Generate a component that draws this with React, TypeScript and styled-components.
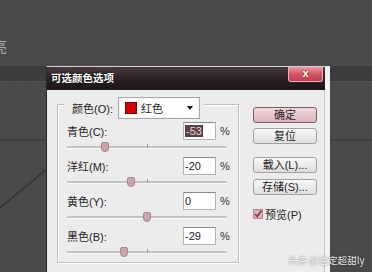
import React from 'react';
import styled, { createGlobalStyle } from 'styled-components';

const GlobalStyle = createGlobalStyle`
  html, body {
    margin: 0;
    padding: 0;
    background: #4a4a4a;
  }
  body {
    font-family: "Liberation Sans", "Noto Sans CJK SC", sans-serif;
  }
`;

const rows = [
  { label: '青色(C):', value: -53, selected: true },
  { label: '洋红(M):', value: -20 },
  { label: '黄色(Y):', value: 0 },
  { label: '黑色(B):', value: -29 },
];

const TRACK = 160;

const App = () => {
  return (
    <Canvas>
      <GlobalStyle />
      <GhostText>亮</GhostText>
      <PanelBand />
      <CurveArt width="372" height="190" viewBox="0 0 372 190">
        <line x1="0" y1="58" x2="372" y2="58" stroke="#3b3b3b" strokeWidth="1.5" />
        <line x1="15" y1="0" x2="15" y2="190" stroke="#464646" strokeWidth="1" />
        <line x1="31" y1="0" x2="31" y2="190" stroke="#464646" strokeWidth="1" />
        <line x1="0" y1="126" x2="48" y2="86" stroke="#333333" strokeWidth="1.5" />
      </CurveArt>

      <Dialog>
        <TitleBar>
          <Title>可选颜色选项</Title>
          <CloseButton>x</CloseButton>
        </TitleBar>
        <Body>
          <GroupBox>
            <Header>
              <HeaderLabel>颜色(O):</HeaderLabel>
              <Dropdown>
                <Swatch />
                <DropText>红色</DropText>
                <Arrow />
              </Dropdown>
            </Header>
            {rows.map((r) => (
              <Row key={r.label}>
                <InputLine>
                  <FieldLabel>{r.label}</FieldLabel>
                  <NumberBox>
                    {r.selected ? <Selected>{r.value}</Selected> : r.value}
                  </NumberBox>
                  <Percent>%</Percent>
                </InputLine>
                <SliderArea>
                  <Track>
                    <Tick />
                    <Thumb $pos={TRACK / 2 + (r.value * TRACK) / 200} />
                  </Track>
                </SliderArea>
              </Row>
            ))}
          </GroupBox>

          <SideColumn>
            <Button $primary>确定</Button>
            <Button $gap={5}>复位</Button>
            <Button $gap={13}>载入(L)...</Button>
            <Button $gap={6}>存储(S)...</Button>
            <CheckRow>
              <CheckBox>
                <svg width="10" height="10" viewBox="0 0 10 10">
                  <path d="M2 5 L4.2 7.5 L8.5 1.5" fill="none" stroke="#8e2f45" strokeWidth="1.6" />
                </svg>
              </CheckBox>
              <span>预览(P)</span>
            </CheckRow>
          </SideColumn>
        </Body>
      </Dialog>

      <Watermark>头条 @注定超甜ly</Watermark>
    </Canvas>
  );
};

export default App;

const Canvas = styled.div`
  position: relative;
  width: 372px;
  height: 272px;
  overflow: hidden;
  background: #4a4a4a;
  padding-top: 38px;
  box-sizing: border-box;
`;

const GhostText = styled.div`
  margin-left: -8px;
  height: 15px;
  font-size: 15px;
  line-height: 15px;
  color: #a9a9a9;
  font-family: "Noto Sans CJK SC", sans-serif;
`;

const PanelBand = styled.div`
  margin-top: 13px;
  height: 15px;
  background: #3c3c3c;
  border-bottom: 1px solid #525252;
`;

const CurveArt = styled.svg`
  display: block;
`;

const Dialog = styled.div`
  position: absolute;
  left: 46px;
  top: 66px;
  width: 284px;
  height: 210px;
  box-sizing: border-box;
  border-left: 1px solid #262626;
  border-top: 1px solid #d6d6d6;
  border-right: 5px solid #f2f2f2;
  background: #ececec;
  display: flex;
  flex-direction: column;
`;

const TitleBar = styled.div`
  height: 23px;
  display: flex;
  align-items: flex-start;
  justify-content: space-between;
  background: linear-gradient(#4a3a40, #2a1f22 55%, #1d1517);
  padding-left: 4px;
`;

const Title = styled.div`
  font-size: 10.5px;
  font-weight: bold;
  color: #ffffff;
  line-height: 23px;
  text-shadow: 0 0 2px #000;
`;

const CloseButton = styled.div`
  width: 35px;
  height: 15px;
  margin-right: 2px;
  box-sizing: border-box;
  border: 1px solid #eab2ba;
  border-top: none;
  border-radius: 0 0 3px 3px;
  background: linear-gradient(#ec9aa5, #d45665 50%, #c23c4c);
  color: #fff;
  font-size: 11px;
  font-weight: bold;
  text-align: center;
  line-height: 13px;
  text-shadow: 0 0 2px #6a1020;
`;

const Body = styled.div`
  flex: 1;
  display: flex;
  align-items: flex-start;
  padding: 14px 0 0 10px;
  border-right: 1px solid #c6c6c6;
  font-size: 11px;
  color: #1e1e1e;
`;

const GroupBox = styled.div`
  width: 182px;
  height: 159px;
  box-sizing: border-box;
  border: 1px solid #bdbdbd;
  box-shadow: 1px 1px 0 #fff, inset 1px 1px 0 #fff;
  padding-left: 9px;
`;

const Header = styled.div`
  display: flex;
  align-items: center;
  width: fit-content;
  margin: -8px 0 0 -3px;
  padding: 0 4px 0 8px;
  background: #ececec;
`;

const HeaderLabel = styled.span`
  width: 46px;
`;

const Dropdown = styled.div`
  width: 82px;
  height: 22px;
  box-sizing: border-box;
  display: flex;
  align-items: center;
  padding: 0 6px;
  background: #fff;
  border: 1px solid #a9a9a9;
  box-shadow: inset 0 0 0 1px #f4f4f4;
`;

const Swatch = styled.span`
  width: 12px;
  height: 12px;
  box-sizing: border-box;
  background: #d90000;
  border: 1px solid #7a0000;
`;

const DropText = styled.span`
  margin-left: 4px;
  flex: 1;
`;

const Arrow = styled.span`
  width: 0;
  height: 0;
  border-left: 3px solid transparent;
  border-right: 3px solid transparent;
  border-top: 4px solid #111;
`;

const Row = styled.div`
  display: flex;
  flex-direction: column;
  &:first-of-type {
    margin-top: 3px;
  }
`;

const InputLine = styled.div`
  display: flex;
  align-items: center;
  height: 18px;
  margin-top: 3px;
`;

const FieldLabel = styled.span`
  width: 116px;
`;

const NumberBox = styled.div`
  width: 33px;
  height: 18px;
  box-sizing: border-box;
  background: #fff;
  border: 1px solid #b3b3b3;
  border-top-color: #8a8a8a;
  padding: 1px 1px 0;
  line-height: 14px;
`;

const Selected = styled.span`
  background: #5b4146;
  color: #e9d4d8;
  padding: 0 1px;
`;

const Percent = styled.span`
  margin-left: 4px;
  color: #333;
`;

const SliderArea = styled.div`
  height: 14px;
  display: flex;
  align-items: center;
`;

const Track = styled.div`
  position: relative;
  width: ${TRACK}px;
  height: 2px;
  background: #c2c2c2;
  border-bottom: 1px solid #fafafa;
`;

const Tick = styled.span`
  position: absolute;
  left: ${TRACK / 2}px;
  top: -2px;
  width: 1px;
  height: 4px;
  background: #9c9c9c;
`;

const Thumb = styled.span<{ $pos: number }>`
  position: absolute;
  left: ${(p) => p.$pos - 4}px;
  top: -4px;
  width: 8px;
  height: 10px;
  box-sizing: border-box;
  background: #cca3ab;
  border: 1px solid #ab838b;
  border-radius: 2px 2px 4px 4px;
`;

const SideColumn = styled.div`
  display: flex;
  flex-direction: column;
  margin-left: 14px;
  padding-top: 3px;
`;

const Button = styled.div<{ $primary?: boolean; $gap?: number }>`
  width: 64px;
  height: 16px;
  box-sizing: border-box;
  margin-top: ${(p) => p.$gap ?? 0}px;
  border: 1px solid ${(p) => (p.$primary ? '#7e5c63' : '#a2a2a2')};
  border-radius: 3px;
  background: ${(p) =>
    p.$primary
      ? 'linear-gradient(#f0d8dc, #dcb6bd)'
      : 'linear-gradient(#f8f8f8, #dedede)'};
  text-align: center;
  line-height: 14px;
  color: #222;
`;

const CheckRow = styled.div`
  display: flex;
  align-items: center;
  margin-top: 13px;
  height: 12px;
  span {
    margin-left: 2px;
  }
`;

const CheckBox = styled.div`
  width: 10px;
  height: 10px;
  box-sizing: border-box;
  background: #dcb0b8;
  border: 1px solid #b38a92;
  display: flex;
  svg {
    margin: -1px;
  }
`;

const Watermark = styled.div`
  position: absolute;
  left: 288px;
  top: 253px;
  white-space: nowrap;
  font-size: 9.6px;
  color: rgba(255, 255, 255, 0.9);
  text-shadow: 0 0 2px rgba(0, 0, 0, 0.6);
  font-family: "Noto Sans CJK SC", sans-serif;
`;
